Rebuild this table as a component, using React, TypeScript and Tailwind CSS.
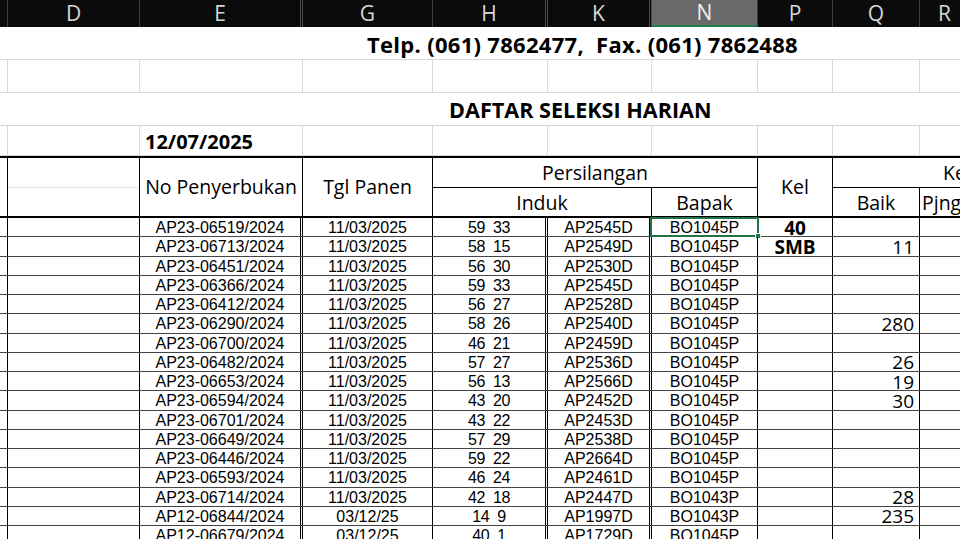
import React from 'react';

const sans = "font-['Open_Sans',sans-serif]";
const arial = "font-['Liberation_Sans',Arial,sans-serif]";

type Col = { key: string; w: string };

const cols: Col[] = [
  { key: 'C', w: 'w-[8px]' },
  { key: 'D', w: 'w-[132px]' },
  { key: 'E', w: 'w-[163px]' },
  { key: 'G', w: 'w-[130px]' },
  { key: 'H', w: 'w-[115px]' },
  { key: 'K', w: 'w-[104px]' },
  { key: 'N', w: 'w-[106px]' },
  { key: 'P', w: 'w-[75px]' },
  { key: 'Q', w: 'w-[87px]' },
  { key: 'R', w: 'w-[50px]' },
  { key: 'S', w: 'w-[200px]' },
];

// kolom yang punya kolom tersembunyi di kanannya -> garis ganda
const hiddenAfter = ['E', 'H', 'K'];

const rows: string[][] = [
  ['AP23-06519/2024', '11/03/2025', '59  33', 'AP2545D', 'BO1045P', '40', ''],
  ['AP23-06713/2024', '11/03/2025', '58  15', 'AP2549D', 'BO1045P', 'SMB', '11'],
  ['AP23-06451/2024', '11/03/2025', '56  30', 'AP2530D', 'BO1045P', '', ''],
  ['AP23-06366/2024', '11/03/2025', '59  33', 'AP2545D', 'BO1045P', '', ''],
  ['AP23-06412/2024', '11/03/2025', '56  27', 'AP2528D', 'BO1045P', '', ''],
  ['AP23-06290/2024', '11/03/2025', '58  26', 'AP2540D', 'BO1045P', '', '280'],
  ['AP23-06700/2024', '11/03/2025', '46  21', 'AP2459D', 'BO1045P', '', ''],
  ['AP23-06482/2024', '11/03/2025', '57  27', 'AP2536D', 'BO1045P', '', '26'],
  ['AP23-06653/2024', '11/03/2025', '56  13', 'AP2566D', 'BO1045P', '', '19'],
  ['AP23-06594/2024', '11/03/2025', '43  20', 'AP2452D', 'BO1045P', '', '30'],
  ['AP23-06701/2024', '11/03/2025', '43  22', 'AP2453D', 'BO1045P', '', ''],
  ['AP23-06649/2024', '11/03/2025', '57  29', 'AP2538D', 'BO1045P', '', ''],
  ['AP23-06446/2024', '11/03/2025', '59  22', 'AP2664D', 'BO1045P', '', ''],
  ['AP23-06593/2024', '11/03/2025', '46  24', 'AP2461D', 'BO1045P', '', ''],
  ['AP23-06714/2024', '11/03/2025', '42  18', 'AP2447D', 'BO1043P', '', '28'],
  ['AP12-06844/2024', '03/12/25', '14  9', 'AP1997D', 'BO1043P', '', '235'],
  ['AP12-06679/2024', '03/12/25', '40  1', 'AP1729D', 'BO1045P', '', ''],
];

function ColumnBar() {
  return (
    <div className={`flex h-[27px] bg-[#0b0b0b] ${sans}`}>
      {cols.map((c) => {
        const active = c.key === 'N';
        const sep = hiddenAfter.includes(c.key)
          ? 'border-r-[3px] border-double border-[#4a4a4a]'
          : 'border-r border-[#3a3a3a]';
        return (
          <div
            key={c.key}
            className={`${c.w} shrink-0 flex items-center justify-center text-[21px] leading-none ${sep} ${
              active ? 'bg-[#6a6a6a] text-[#f0f0f0] border-b-2 border-b-[#1f7a4a]' : 'text-[#d8d8d8]'
            }`}
          >
            {c.key === 'C' || c.key === 'S' ? '' : c.key}
          </div>
        );
      })}
    </div>
  );
}

function LightRow({ h, children }: { h: string; children?: Partial<Record<string, React.ReactNode>> }) {
  return (
    <div className={`flex ${h} border-b border-[#d9d9d9]`}>
      {cols.map((c) => (
        <div key={c.key} className={`${c.w} shrink-0 border-r border-[#d9d9d9] flex items-center overflow-visible whitespace-nowrap`}>
          {children?.[c.key]}
        </div>
      ))}
    </div>
  );
}

function TableHeader() {
  return (
    <div className={`flex h-[60px] border-b-2 border-black ${sans} text-[19.5px] text-black`}>
      <div className="w-[8px] shrink-0 border-r border-black" />
      <div className="w-[132px] shrink-0 border-r border-black">
        <div className="h-[30px] border-b border-[#e3e3e3]" />
      </div>
      <div className="w-[163px] shrink-0 border-r border-black flex items-center justify-center">No Penyerbukan</div>
      <div className="w-[130px] shrink-0 border-r border-black flex items-center justify-center">Tgl Panen</div>
      <div className="w-[325px] shrink-0 flex flex-col">
        <div className="h-[30px] border-b border-black border-r flex items-center justify-center">Persilangan</div>
        <div className="flex flex-1">
          <div className="w-[219px] border-r border-black flex items-center justify-center">Induk</div>
          <div className="w-[106px] border-r border-black flex items-center justify-center">Bapak</div>
        </div>
      </div>
      <div className="w-[75px] shrink-0 border-r border-black flex items-center justify-center">Kel</div>
      <div className="w-[337px] shrink-0 flex flex-col">
        <div className="h-[30px] border-b border-black flex items-center justify-center pr-[12px]">Keterangan</div>
        <div className="flex flex-1">
          <div className="w-[87px] border-r border-black flex items-center justify-center">Baik</div>
          <div className="w-[50px] border-r border-black flex items-center pl-[2px]">Pjng</div>
          <div className="w-[200px]" />
        </div>
      </div>
    </div>
  );
}

function DataRow({ r, selected }: { r: string[]; selected?: boolean }) {
  const [no, tgl, induk1, induk2, bapak, kel, baik] = r;
  const cell = 'shrink-0 h-full flex items-center';
  const txt = `${arial} text-[16px] leading-none pt-[2px]`;
  return (
    <div className="flex h-[19.25px] border-b border-[#444444] text-black">
      <div className={`w-[8px] ${cell} border-r border-black`} />
      <div className={`w-[132px] ${cell} border-r border-black`} />
      <div className={`w-[163px] ${cell} justify-center border-r-[3px] border-double border-black ${txt}`}>{no}</div>
      <div className={`w-[130px] ${cell} justify-center border-r border-black ${txt}`}>{tgl}</div>
      <div className={`w-[115px] ${cell} justify-center border-r-[3px] border-double border-black ${txt} whitespace-pre tracking-[-0.4px]`}>{induk1}</div>
      <div className={`w-[104px] ${cell} justify-center border-r-[3px] border-double border-black ${txt}`}>{induk2}</div>
      <div className={`w-[106px] ${cell} justify-center border-r border-black ${txt} relative`}>
        {bapak}
        {selected && (
          <div className="absolute -inset-x-[2px] -top-[1px] -bottom-[1px] border-2 border-[#217346]">
            <div className="absolute -right-[4px] -bottom-[4px] w-[6px] h-[6px] bg-[#217346] border border-white" />
          </div>
        )}
      </div>
      <div className={`w-[75px] ${cell} justify-center border-r border-black ${sans} text-[19px] font-bold leading-none pt-[2px]`}>{kel}</div>
      <div className={`w-[87px] ${cell} justify-end pr-[5px] border-r border-black ${sans} text-[19px] leading-none pt-[2px]`}>{baik}</div>
      <div className={`w-[50px] ${cell} border-r border-black`} />
      <div className={`w-[200px] ${cell}`} />
    </div>
  );
}

export default function App() {
  return (
    <div className="w-[960px] h-[539px] overflow-hidden bg-white">
      <div className="w-[1100px]">
        <ColumnBar />
        <div className={`h-[33px] border-b border-[#d9d9d9] flex items-center pl-[367px] pt-[3px] ${sans} text-[22px] font-bold tracking-[0.3px] text-black whitespace-pre`}>
          {'Telp. (061) 7862477,  Fax. (061) 7862488'}
        </div>
        <LightRow h="h-[33px]" />
        <div className={`h-[33px] border-b border-[#d9d9d9] flex items-center pl-[449px] pt-[2px] ${sans} text-[21.6px] font-bold text-black`}>
          DAFTAR SELEKSI HARIAN
        </div>
        <div className="border-b-2 border-black">
          <LightRow h="h-[30px]">
            {{
              E: <span className={`${sans} text-[20px] font-bold text-black pl-[5px] pt-[2px]`}>12/07/2025</span>,
            }}
          </LightRow>
        </div>
        <TableHeader />
        {rows.map((r, i) => (
          <DataRow key={i} r={r} selected={i === 0} />
        ))}
      </div>
    </div>
  );
}
